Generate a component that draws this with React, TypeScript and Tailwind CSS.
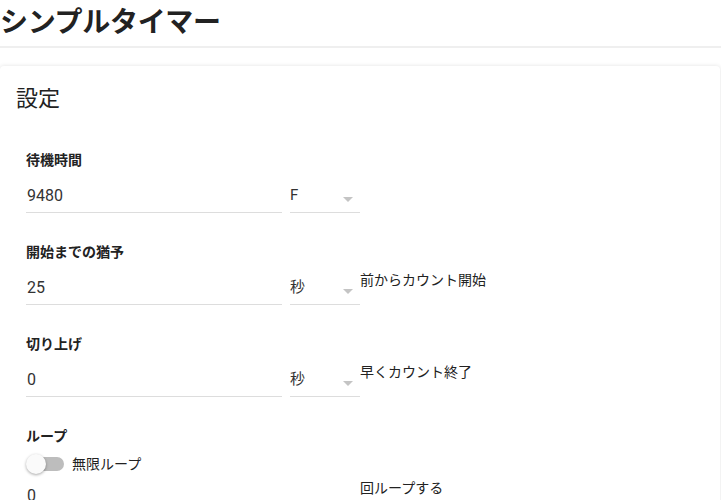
import React from "react";

const font = { fontFamily: "Roboto, 'Noto Sans CJK JP', sans-serif" };

function Arrow() {
  return (
    <svg width="10" height="5" viewBox="0 0 10 5" className="absolute right-[7px] top-[17px]">
      <path d="M0 0 L10 0 L5 5 Z" fill="#c4c4c4" />
    </svg>
  );
}

function Field({ label, value, unit, side }: { label: string; value: string; unit: string; side?: string }) {
  return (
    <div className="flex flex-col">
      <div className="h-[20px] leading-[20px] text-[14px] font-bold text-[#222]">{label}</div>
      <div className="mt-[10px] flex items-start">
        <div className="w-[256px] h-[33px] border-b border-[#ddd] text-[16px] leading-[32px] pl-[1px] text-[#333]">{value}</div>
        <div className="relative ml-[8px] w-[70px] h-[33px] border-b border-[#ddd] text-[15px] leading-[30px] text-[#333]">
          {unit}
          <Arrow />
        </div>
        {side && <div className="text-[14px] leading-[16px] text-[#222] whitespace-nowrap">{side}</div>}
      </div>
    </div>
  );
}

export default function App() {
  return (
    <div className="w-[721px] h-[500px] overflow-hidden bg-white" style={font}>
      <div className="h-[48px] border-b-2 border-[#efefef]">
        <h1 className="text-[28px] leading-[46px] font-bold text-[#222] tracking-[-0.3px]">シンプルタイマー</h1>
      </div>
      <div className="mt-[18px] mr-[1px] rounded-[4px] bg-white shadow-[0_0_4px_rgba(0,0,0,0.12)] pl-[16px] pt-[20px] h-[600px]">
        <div className="text-[22px] leading-[26px] text-[#222]">設定</div>
        <div className="pl-[10px] mt-[38px] flex flex-col gap-[29px]">
          <Field label="待機時間" value="9480" unit="F" />
          <Field label="開始までの猶予" value="25" unit="秒" side="前からカウント開始" />
          <Field label="切り上げ" value="0" unit="秒" side="早くカウント終了" />
          <div className="flex flex-col">
            <div className="h-[20px] leading-[20px] text-[14px] font-bold text-[#222]">ループ</div>
            <div className="mt-[8px] h-[20px] flex items-center">
              <div className="relative w-[38px] h-[20px] flex items-center">
                <div className="ml-[3px] w-[35px] h-[14px] rounded-full bg-[#bdbdbd]" />
                <div className="absolute left-0 top-0 w-[20px] h-[20px] rounded-full bg-[#fafafa] shadow-[0_1px_3px_rgba(0,0,0,0.35)]" />
              </div>
              <span className="ml-[8px] text-[14px] text-[#222]">無限ループ</span>
            </div>
            <div className="mt-[6px] flex items-start">
              <div className="w-[256px] h-[33px] border-b border-[#ddd] text-[16px] leading-[32px] pl-[1px] text-[#333]">0</div>
              <div className="ml-[78px] text-[14px] leading-[16px] text-[#222]">回ループする</div>
            </div>
          </div>
        </div>
      </div>
    </div>
  );
}
